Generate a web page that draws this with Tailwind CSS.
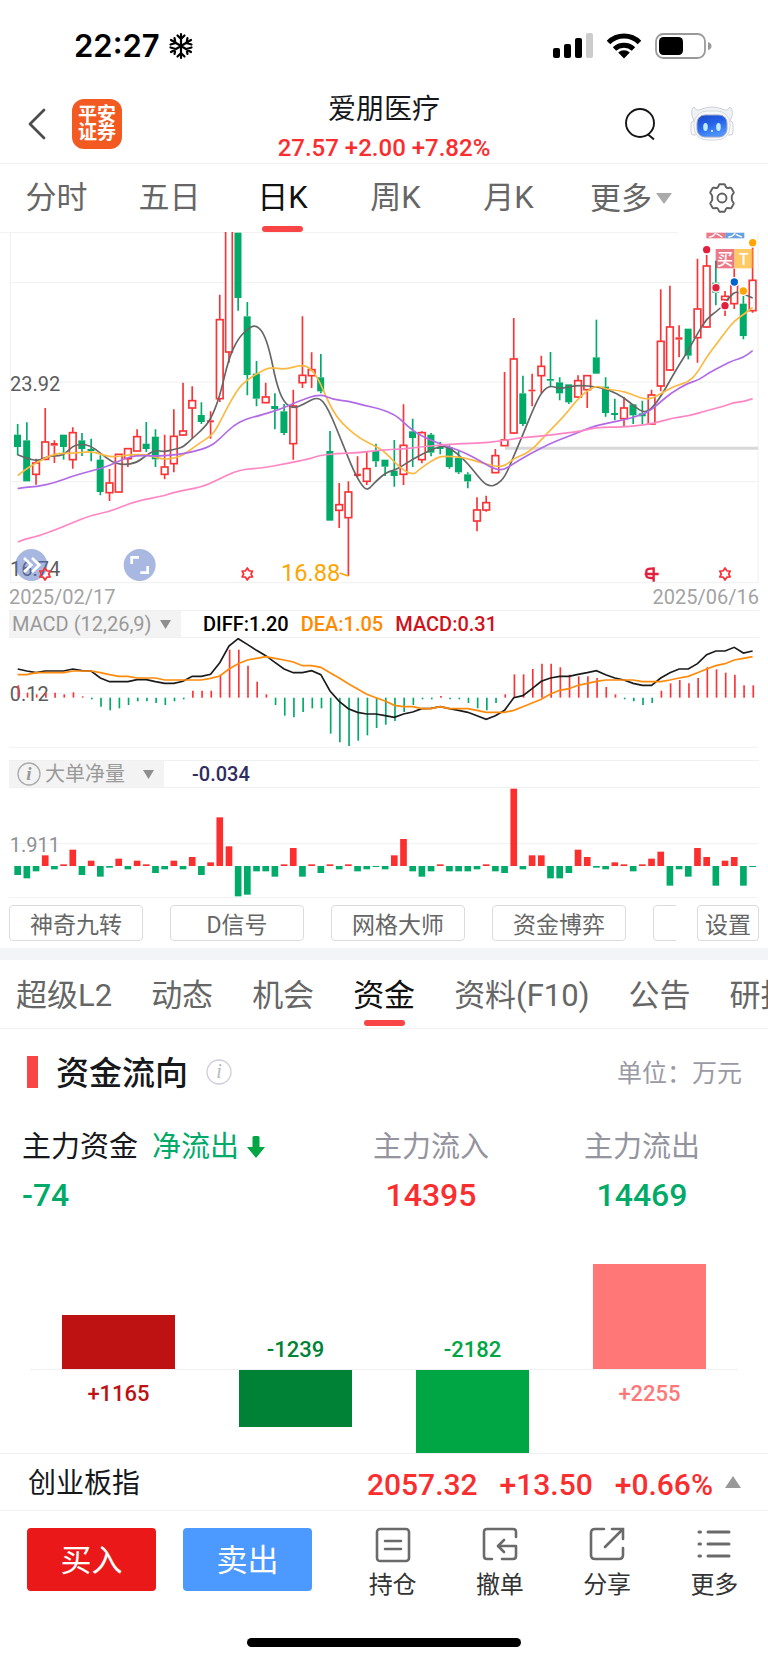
<!DOCTYPE html>
<html lang="zh-CN">
<head>
    <meta charset="UTF-8">
    <meta name="viewport" content="width=device-width, initial-scale=1.0">
    <title>爱朋医疗</title>
    <script src="https://cdn.jsdelivr.net/npm/@tailwindcss/browser@4"></script>
</head>
<body class="bg-white font-['Roboto','Noto_Sans_CJK_SC',sans-serif] text-[#17181c] overflow-x-hidden">

    <!-- Status bar -->
    <div class="h-[88px] pt-1 pl-[74px] pr-14 flex items-center justify-between">
        <div class="flex items-center gap-2 text-black">
            <span class="font-['Inter',sans-serif] text-[31px] leading-8 font-semibold">22:27</span>
            <svg class="w-[26px] h-[28px]" viewBox="0 0 26 28" fill="none" stroke="#000" stroke-width="2.2" stroke-linecap="round">
                <path d="M13 2v24M3 8l20 12M23 8L3 20M9.500 3.500L13 7l3.500-3.500M9.500 24.500L13 21l3.500 3.500M2.500 12.500l5-1.500-1-5M23.500 15.500l-5 1.500 1 5M23.500 12.500l-5-1.500 1-5M2.500 15.500l5 1.500-1 5"/>
            </svg>
        </div>
        <div class="flex items-center gap-[13px]">
            <svg class="w-10 h-[26px]" viewBox="0 0 40 26">
                <rect x="0" y="15" width="7" height="10" rx="2"/>
                <rect x="11" y="11" width="7" height="14" rx="2"/>
                <rect x="22" y="5" width="7" height="20" rx="2"/>
                <rect x="33" y="0" width="7" height="25" rx="2" fill="#ccc"/>
            </svg>
            <svg class="w-9 h-[26px]" viewBox="0 0 36 26" fill="none" stroke="#000" stroke-width="5">
                <path d="M2.500 9.500a22 22 0 0 1 31 0"/>
                <path d="M8.500 16a14 14 0 0 1 19 0"/>
                <path d="M18 25.500l-5.800-6a8.500 8.500 0 0 1 11.600 0z" fill="#000" stroke="none"/>
            </svg>
            <svg class="w-[57px] h-[26px]" viewBox="0 0 57 26">
                <rect x="1" y="1" width="49" height="24" rx="7.500" fill="none" stroke="#999" stroke-width="1.800"/>
                <rect x="4" y="4" width="24" height="18" rx="4.500"/>
                <path d="M53 9q3.500 1 3.500 4t-3.500 4z" fill="#999"/>
            </svg>
        </div>
    </div>

    <!-- Stock header -->
    <header class="h-[76px] pb-1 border-b border-[#f1f1f3] flex items-center justify-between pl-7 pr-[34px]">
        <div class="flex items-center gap-[26px] w-[200px]">
            <button aria-label="返回">
                <svg class="w-[18px] h-8" viewBox="0 0 18 32" fill="none" stroke="#4d4d4d" stroke-width="2.800" stroke-linecap="round" stroke-linejoin="round"><path d="M16 2L2 16l14 14"/></svg>
            </button>
            <a href="#" class="w-[50px] h-[50px] rounded-xl bg-[#f25a22] text-white text-[19px] leading-[18px] font-bold text-center flex items-center justify-center">平安<br>证券</a>
        </div>
        <div class="text-center">
            <h1 class="text-[28px] leading-12 font-normal">爱朋医疗</h1>
            <p class="text-[24px] leading-7 font-medium text-[#fa2d2f] whitespace-nowrap">27.57 +2.00 +7.82%</p>
        </div>
        <div class="flex items-center justify-end gap-[34px] w-[194px]">
            <button aria-label="搜索">
                <svg class="w-8 h-8" viewBox="0 0 32 32" fill="none" stroke="#15161a" stroke-width="1.900"><circle cx="16" cy="15" r="14"/><path d="M23.500 26l6.500 5.500"/></svg>
            </button>
            <button aria-label="智能助手">
                <svg class="w-11 h-9" viewBox="0 0 44 36">
                    <defs><linearGradient id="face" x1="0" y1="0" x2="0.400" y2="1"><stop offset="0" stop-color="#1d46c8"/><stop offset="0.500" stop-color="#2463e8"/><stop offset="1" stop-color="#4d92fb"/></linearGradient></defs>
                    <path d="M4 15Q-1 4 4 1q2 4 5 3 13-6 26 0 3 1 5-3 5 4 0 14" fill="#f0f1f5" stroke="#d0d2d9"/>
                    <rect x="1" y="15" width="7" height="14" rx="3" fill="#fafafa" stroke="#cfd0d7"/>
                    <rect x="36" y="15" width="7" height="14" rx="3" fill="#fafafa" stroke="#cfd0d7"/>
                    <rect x="4" y="5" width="36" height="29" rx="13" fill="#f6f7f9" stroke="#d9dadf"/>
                    <rect x="7" y="9" width="30" height="22" rx="8" fill="url(#face)" stroke="#9aa4c8"/>
                    <ellipse cx="15.500" cy="21" rx="2.300" ry="4" fill="#c3ecff"/>
                    <ellipse cx="28.500" cy="21" rx="2.300" ry="4" fill="#c3ecff"/>
                    <circle cx="22" cy="25" r="1" fill="#fff"/>
                </svg>
            </button>
        </div>
    </header>

    <!-- Period tabs -->
    <nav class="h-[68px] grid grid-cols-[113fr_113fr_113fr_113fr_113fr_132fr_50fr_21fr] text-[31px] leading-[67px] text-[#666] text-center">
        <a href="#">分时</a>
        <a href="#">五日</a>
        <a href="#" class="text-[#111] flex flex-col items-center">
            <span class="h-[62px]">日K</span>
            <span class="w-[41px] h-[6px] rounded-[3px] bg-[#f94545]"></span>
        </a>
        <a href="#">周K</a>
        <a href="#">月K</a>
        <button class="flex items-center justify-center gap-1">更多
            <svg class="w-4 h-[11px]" viewBox="0 0 16 11"><path d="M0 0h16L8 11z" fill="#aaa"/></svg>
        </button>
        <button class="flex items-center justify-center" aria-label="图表设置">
            <svg class="w-[30px] h-[30px]" viewBox="0 0 30 30" fill="none" stroke="#606060" stroke-width="1.900" stroke-linejoin="round">
                <path d="M12.500 1.200h5c.7 0 .8 2.800 2.300 3.600s3.800-.7 4.400 0l2.600 4.600c.4.800-2 2.300-2 3.900v3.400c0 1.600 2.400 3.100 2 3.900l-2.600 4.600c-.6.700-2.900-.8-4.400 0s-1.600 3.600-2.300 3.600h-5c-.7 0-.8-2.800-2.300-3.600s-3.800.7-4.400 0l-2.600-4.600c-.4-.8 2-2.300 2-3.900v-3.400c0-1.600-2.400-3.100-2-3.900l2.600-4.600c.6-.7 2.900.8 4.400 0s1.600-3.600 2.300-3.600z"/>
                <circle cx="15" cy="15" r="4.500"/>
            </svg>
        </button>
    </nav>

    <!-- K line chart, svg units are thirds of a pixel -->
    <svg id="kline" class="block w-full" viewBox="0 20 2304 1056" role="img" aria-label="日K线图">
        <g stroke="#f0f0f1" stroke-width="3" fill="none">
            <path d="M0 21H2034M30 172H2274M30 470H2274M30 769H2274M30 1072H2274M31 20V1072M2274 24V1072"/>
        </g>
        <path d="M1515 669H2274" stroke="#d8d8d8" stroke-width="9"/>
        <g id="candles"></g>
        <g id="averages" fill="none" stroke-width="5"></g>
        <g class="font-['Roboto',sans-serif]" font-size="60" fill="#5c5c5c">
            <text x="30" y="498">23.92</text>
            <text x="30" y="1053">16.74</text>
        </g>
        <text x="843" y="1067" font-size="71" fill="#ffa500" class="font-['Roboto',sans-serif]">16.88</text>
        <path d="M1019 1043l26 9" stroke="#ffa500" stroke-width="5"/>
        <circle cx="94" cy="1019" r="48" fill="#4f6fc0" fill-opacity="0.500"/>
        <path d="M72 998l22 21-22 21M96 998l22 21-22 21" fill="none" stroke="#fff" stroke-width="8"/>
        <circle cx="419" cy="1019" r="48" fill="#a8b8e0"/>
        <path d="M395 1016V996h22M421 1042h22v-20" fill="none" stroke="#fff" stroke-width="8"/>
        <g id="stars" fill="none" stroke="#fa3436" stroke-width="5" stroke-linejoin="round"></g>
        <path d="M1962 1030h-10q-13 0-13 8v12q0 8 13 8h10M1961 1026v43M1934 1046h42" stroke="#e0203c" stroke-width="7" fill="none"/>
        <g fill-opacity="0.600">
            <rect x="2119" y="22" width="57" height="17" fill="#e0203c"/>
            <rect x="2176" y="22" width="57" height="17" fill="#0062d0"/>
            <rect x="2147" y="71" width="56" height="58" fill="#e0203c"/>
            <rect x="2203" y="71" width="56" height="58" fill="#ffa500"/>
        </g>
        <svg x="2119" y="22" width="114" height="17" viewBox="0 0 114 17">
            <g font-size="48" fill="#fff" class="font-['Noto_Sans_CJK_SC',sans-serif]"><text x="4" y="9">买</text><text x="61" y="9">卖</text></g>
        </svg>
        <g font-size="48" fill="#fff" text-anchor="middle" class="font-['Noto_Sans_CJK_SC',sans-serif] font-medium">
            <text x="2175" y="118">买</text><text x="2231" y="118">T</text>
        </g>
        <g id="trades"></g>
    </svg>
    <div class="h-[23px] px-[9px] flex justify-between text-[20px] leading-[26px] text-[#a3a3a3]">
        <span>2025/02/17</span><span>2025/06/16</span>
    </div>

    <!-- MACD -->
    <section class="px-[9px]">
        <div class="mt-[3px] h-7 border-y border-[#f0f0f0] flex items-center text-[20px] leading-[26px] font-medium whitespace-nowrap">
            <button class="h-[26px] w-[172px] px-[3px] bg-[#f3f3f3] font-normal text-[#999] flex items-center gap-2">MACD (12,26,9)
                <svg class="w-[11px] h-[9px]" viewBox="0 0 11 9"><path d="M0 0h11L5.500 9z" fill="#8e8e8e"/></svg>
            </button>
            <span class="ml-[22px] text-black">DIFF:1.20</span>
            <span class="ml-3 text-[#ff8a00]">DEA:1.05</span>
            <span class="ml-3 text-[#d0121b]">MACD:0.31</span>
        </div>
    </section>
    <svg class="block w-full" viewBox="0 143 2304 330" role="img" aria-label="MACD">
        <path d="M27 310H2274M27 471H2274" stroke="#f1f1f2" stroke-width="3"/>
        <text x="29" y="333" font-size="60" fill="#5c5c5c" class="font-['Roboto',sans-serif]">0.12</text>
        <g id="macd"></g>
    </svg>

    <!-- Large order net volume -->
    <section class="px-[9px] pt-3">
        <div class="h-7 border-y border-[#f0f0f0] flex items-center text-[20px] leading-[26px]">
            <button class="h-[26px] w-[155px] pl-2 bg-[#f3f3f3] text-[#999] flex items-center">
                <svg class="w-6 h-6 mr-1" viewBox="0 0 24 24"><circle cx="12" cy="12" r="11" fill="none" stroke="#aaa" stroke-width="1.300"/><text x="12" y="18" text-anchor="middle" font-size="19" fill="#999" class="font-['Liberation_Serif',serif] italic font-bold">i</text></svg>
                大单净量
                <svg class="w-[11px] h-[9px] ml-[18px]" viewBox="0 0 11 9"><path d="M0 0h11L5.500 9z" fill="#8e8e8e"/></svg>
            </button>
            <span class="ml-7 font-medium text-[#302c60]">-0.034</span>
        </div>
    </section>
    <svg class="block w-full" viewBox="0 590 2304 330" role="img" aria-label="大单净量">
        <path d="M27 757H2274M27 919H2274" stroke="#f1f1f2" stroke-width="3"/>
        <text x="29" y="781" font-size="60" fill="#8f8f96" class="font-['Roboto',sans-serif]">1.911</text>
        <g id="net"></g>
    </svg>

    <!-- Indicator shortcuts -->
    <div class="pt-[7px] pb-[7px] px-[9px] flex text-[23px] leading-8 text-[#666]">
        <div class="flex-1 flex gap-[27px] overflow-hidden mr-[21px]">
            <button class="w-[134px] shrink-0 h-9 pt-1 border border-[#dcdcdc] rounded">神奇九转</button>
            <button class="w-[134px] shrink-0 h-9 pt-1 border border-[#dcdcdc] rounded">D信号</button>
            <button class="w-[134px] shrink-0 h-9 pt-1 border border-[#dcdcdc] rounded">网格大师</button>
            <button class="w-[134px] shrink-0 h-9 pt-1 border border-[#dcdcdc] rounded">资金博弈</button>
            <button class="w-[134px] shrink-0 h-9 pt-1 border border-[#dcdcdc] rounded" aria-label="更多指标"></button>
        </div>
        <button class="w-[62px] h-9 pt-1 border border-[#dcdcdc] rounded">设置</button>
    </div>

    <!-- Info tabs -->
    <nav class="border-t-12 border-t-[#f3f4f8] border-b border-b-[#f1f1f3] h-[81px] pl-4 flex gap-[39px] overflow-hidden whitespace-nowrap text-[31px] leading-[72px] text-[#666]">
        <a href="#">超级L2</a>
        <a href="#">动态</a>
        <a href="#">机会</a>
        <a href="#" class="text-[#111] flex flex-col items-center">
            <span class="h-[60px]">资金</span>
            <span class="w-[41px] h-[6px] rounded-[3px] bg-[#f94545]"></span>
        </a>
        <a href="#">资料(F10)</a>
        <a href="#">公告</a>
        <a href="#">研报</a>
    </nav>

    <!-- Capital flow -->
    <main>
        <div class="pt-5 pl-[27px] pr-[26px] flex items-center">
            <span class="w-[11px] h-8 bg-[#f94545]"></span>
            <h2 class="ml-[18px] pt-1 text-[33px] leading-[42px] font-medium">资金流向</h2>
            <button class="ml-[18px]" aria-label="说明">
                <svg class="w-[26px] h-[26px]" viewBox="0 0 26 26"><circle cx="13" cy="13" r="12" fill="none" stroke="#ceced8" stroke-width="1.300"/><text x="13" y="19" text-anchor="middle" font-size="20" fill="#b8b8c4" class="font-['Liberation_Serif',serif] italic">i</text></svg>
            </button>
            <span class="ml-auto pt-1 text-[25px] text-[#9a9aa4]">单位：万元</span>
        </div>
        <div class="mt-8 pl-[22px] grid grid-cols-[304fr_210fr_212fr_20fr] text-[29px] leading-10">
            <div>
                <p class="flex items-center">主力资金<span class="ml-[14px] mr-2 text-[#00aa68]">净流出</span>
                    <svg class="w-[18px] h-[22px]" viewBox="0 0 18 22"><path d="M5.500 1.500q0-1.500 1.500-1.500h4q1.500 0 1.500 1.500V11H18L9 22 0 11h5.500z" fill="#00a544"/></svg>
                </p>
                <p class="mt-2 text-[32px] font-medium text-[#00aa68]">-74</p>
            </div>
            <div class="text-center">
                <p class="text-[#94949e]">主力流入</p>
                <p class="mt-2 text-[32px] font-medium text-[#fa2d2f]">14395</p>
            </div>
            <div class="text-center">
                <p class="text-[#94949e]">主力流出</p>
                <p class="mt-2 text-[32px] font-medium text-[#00aa68]">14469</p>
            </div>
        </div>
        <div class="mt-[47px] px-[30px] grid grid-cols-4 text-[22px] leading-8 font-medium text-center">
            <div class="flex flex-col">
                <div class="h-[108px] flex flex-col justify-end border-b border-[#f0f0f2]"><div class="mx-8 bg-[#be1212]" style="height:54px"></div></div>
                <p class="pt-2 text-[#be1212]">+1165</p>
            </div>
            <div class="flex flex-col text-[#008236]">
                <div class="h-[108px] flex flex-col justify-end border-b border-[#f0f0f2]"><p class="mb-[3px]">-1239</p></div>
                <div class="mx-8 bg-[#008236]" style="height:57px"></div>
            </div>
            <div class="flex flex-col text-[#00a544]">
                <div class="h-[108px] flex flex-col justify-end border-b border-[#f0f0f2]"><p class="mb-[3px]">-2182</p></div>
                <div class="mx-8 bg-[#00a544]" style="height:83px"></div>
            </div>
            <div class="flex flex-col">
                <div class="h-[108px] flex flex-col justify-end border-b border-[#f0f0f2]"><div class="mx-8 bg-[#ff7777]" style="height:105px"></div></div>
                <p class="pt-2 text-[#ff7777]">+2255</p>
            </div>
        </div>
    </main>

    <!-- Index row -->
    <div class="h-[58px] pt-1 border-y border-[#f0f0f4] pl-7 pr-[27px] flex items-center text-[28px]">
        <span>创业板指</span>
        <span class="ml-auto flex gap-[22px] text-[30px] font-medium text-[#fa2d2f]"><span>2057.32</span><span>+13.50</span><span>+0.66%</span></span>
        <svg class="ml-3 mb-1 w-4 h-3" viewBox="0 0 16 12"><path d="M8 0l8 12H0z" fill="#999"/></svg>
    </div>

    <!-- Trade bar -->
    <footer>
        <div class="pt-4 pl-[27px] flex items-start">
            <button class="mt-px pt-1 w-[129px] h-[63px] rounded bg-[#ea1818] text-white text-[31px]">买入</button>
            <button class="mt-px pt-1 ml-[27px] w-[129px] h-[63px] rounded bg-[#4c9aff] text-white text-[31px]">卖出</button>
            <div class="ml-[27px] flex-1 grid grid-cols-4 text-[24px] leading-8 text-[#333]">
                <button class="flex flex-col items-center gap-1.5">
                    <svg class="w-9 h-9" viewBox="0 0 36 36" fill="none" stroke="#6a6a6a" stroke-width="2.600" stroke-linecap="round"><rect x="2" y="2" width="32" height="32" rx="3"/><path d="M10 14h16M10 22h16"/></svg>
                    持仓
                </button>
                <button class="flex flex-col items-center gap-1.5">
                    <svg class="w-9 h-9" viewBox="0 0 36 36" fill="none" stroke="#6a6a6a" stroke-width="2.600" stroke-linecap="round" stroke-linejoin="round"><path d="M34 10V5q0-3-3-3H5Q2 2 2 5v24q0 3 3 3h5M20 32h11q3 0 3-3V19H17M22 13l-6 6 6 6"/></svg>
                    撤单
                </button>
                <button class="flex flex-col items-center gap-1.5">
                    <svg class="w-9 h-9" viewBox="0 0 36 36" fill="none" stroke="#6a6a6a" stroke-width="2.600" stroke-linecap="round"><path d="M15 2H6Q2 2 2 6v22q0 4 4 4h24q4 0 4-4v-7M23 2h11v10M33 3L16 20"/></svg>
                    分享
                </button>
                <button class="flex flex-col items-center gap-1.5">
                    <svg class="w-9 h-9" viewBox="0 0 36 36" fill="none" stroke="#6a6a6a" stroke-width="3" stroke-linecap="round"><path d="M3 5h1.500M3 17h1.500M3 29h1.500M12 5h21M12 17h21M12 29h21"/></svg>
                    更多
                </button>
            </div>
        </div>
        <div class="mt-[37px] mb-[14px] mx-auto w-[274px] h-[9px] rounded-full bg-black"></div>
    </footer>

    <script>
        const RED = '#fa3436';
        const GREEN = '#00aa68';
        const NS = 'http://www.w3.org/2000/svg';
        const xAt = i => 53 + 27.56 * i;

        function add(parentId, tag, attrs) {
            const el = document.createElementNS(NS, tag);
            for (const key in attrs) el.setAttribute(key, attrs[key]);
            document.getElementById(parentId).appendChild(el);
        }

        // up (1) or down (0), high, body top, body bottom, low
        const candles = [
            [0,596,628,665,690],[0,591,645,768,768],[1,700,713,747,778],[1,548,650,702,705],[1,645,653,661,713],
            [0,628,628,665,703],[1,606,622,703,730],[0,623,645,671,692],[0,640,671,677,708],[0,690,703,800,810],
            [1,731,773,802,827],[1,687,687,800,800],[1,670,670,700,725],[1,612,634,677,677],[0,590,655,671,680],
            [0,612,634,702,725],[1,628,725,747,762],[1,552,633,715,741],[1,472,617,629,632],[1,483,526,548,640],
            [0,531,569,590,596],[1,558,585,591,640],[1,208,283,520,530],[1,22,0,380,412],[0,22,22,218,256],
            [0,230,273,449,510],[0,407,445,520,543],[1,472,515,532,534],[0,504,542,551,612],[0,536,558,623,629],
            [1,493,542,655,703],[1,273,450,472,488],[1,381,433,451,488],[0,386,456,498,504],[0,617,677,886,886],
            [1,773,838,855,908],[1,768,800,877,1052],[1,693,745,752,755],[1,680,730,768,779],[0,655,677,708,725],
            [0,703,703,724,752],[0,644,736,752,784],[1,537,660,747,779],[0,580,618,638,725],[1,618,622,703,714],
            [0,623,628,682,693],[0,650,665,671,687],[0,660,665,725,730],[0,677,698,741,746],[0,741,747,768,789],
            [1,816,854,887,918],[1,811,832,854,859],[1,671,691,742,743],[1,440,644,661,662],[1,278,401,623,625],
            [0,451,504,596,602],[1,445,493,498,543],[1,391,423,451,504],[0,380,461,466,482],[0,456,471,504,525],
            [0,477,477,531,536],[1,450,466,515,518],[1,450,451,493,548],[0,283,396,445,445],[0,456,484,563,574],
            [0,520,563,569,585],[1,515,548,580,605],[0,536,537,570,596],[0,526,564,573,596],[1,493,509,596,598],
            [1,192,348,482,498],[1,181,305,434,437],[1,300,336,343,396],[0,310,310,391,402],[1,100,251,337,412],
            [1,88,122,305,307],[0,106,172,202,240],[1,197,213,223,272],[1,130,165,235,251],[0,210,235,332,342],
            [1,60,165,256,262]
        ];
        candles.forEach(([up, high, top, bottom, low], i) => {
            const x = xAt(i);
            const color = up ? RED : GREEN;
            add('candles', 'path', { d: `M${x} ${high}V${top}M${x} ${bottom}V${low}`, stroke: color, 'stroke-width': 5 });
            if (up && bottom - top > 9) {
                add('candles', 'rect', { x: x - 10, y: top, width: 20, height: bottom - top, fill: '#fff', stroke: color, 'stroke-width': 5 });
            } else {
                add('candles', 'rect', { x: x - 11, y: top, width: 21, height: Math.max(bottom - top, 5), fill: color });
            }
        });

        // Moving averages: x,y pairs joined through their midpoints
        const averages = [
            ['#666', '53,688 108,711 140,693 190,691 218,662 245,656 273,662 300,682 335,710 370,719 411,712 438,690 466,674 493,680 521,672 548,667 576,640 604,615 631,585 659,515 686,400 714,340 742,312 765,298 790,320 810,380 828,470 850,530 880,550 910,537 955,512 985,550 1030,660 1060,735 1085,780 1103,796 1125,770 1160,740 1190,733 1240,700 1290,675 1325,661 1350,668 1390,700 1420,735 1450,772 1470,783 1490,778 1515,755 1540,695 1570,625 1600,550 1625,500 1650,480 1680,491 1710,483 1740,480 1790,484 1830,495 1870,515 1905,545 1932,562 1955,550 1985,510 2030,430 2065,375 2095,320 2120,280 2150,258 2175,235 2190,212 2210,197 2235,208 2258,218'],
            ['#fcb941', '53,751 80,730 108,713 163,684 218,684 273,678 300,686 335,696 390,688 438,688 466,696 493,702 521,699 548,690 576,670 604,650 631,633 650,610 680,550 714,490 742,463 780,440 810,425 855,433 905,418 930,428 955,460 985,530 1010,575 1040,607 1080,640 1130,665 1155,680 1200,728 1240,750 1260,730 1310,697 1330,692 1390,696 1440,711 1490,724 1515,722 1540,700 1570,688 1600,670 1640,625 1690,575 1730,525 1760,497 1790,480 1820,492 1860,496 1890,505 1920,517 1945,522 1970,512 2000,495 2030,480 2065,470 2090,445 2120,395 2150,355 2180,315 2205,285 2230,268 2258,246'],
            ['#b26be6', '53,790 80,785 108,784 163,773 218,752 273,737 328,722 370,700 411,690 466,692 521,690 576,680 631,664 660,640 700,600 740,580 770,573 840,552 890,530 960,505 1000,523 1045,527 1090,540 1140,550 1185,568 1210,590 1240,618 1290,645 1350,665 1400,685 1440,707 1480,730 1510,735 1540,715 1590,685 1650,655 1700,635 1750,615 1790,600 1850,588 1900,577 1945,560 1970,540 2010,505 2065,473 2095,465 2130,440 2170,420 2200,405 2230,397 2258,376'],
            ['#ff86c4', '53,950 80,940 108,934 163,915 218,892 273,870 328,859 370,842 411,827 493,811 521,801 604,785 650,765 700,740 740,731 780,729 860,715 930,700 960,690 1010,685 1080,682 1140,674 1210,671 1260,665 1350,656 1430,654 1500,648 1560,637 1630,632 1690,624 1740,618 1790,606 1870,605 1910,601 1960,595 2020,577 2065,572 2120,556 2170,543 2200,532 2230,529 2258,520']
        ];
        averages.forEach(([color, text]) => {
            const pts = text.split(' ').map(p => p.split(',').map(Number));
            let d = `M${pts[0]}`;
            for (let i = 1; i < pts.length - 1; i++) {
                d += `Q${pts[i]} ${(pts[i][0] + pts[i + 1][0]) / 2},${(pts[i][1] + pts[i + 1][1]) / 2}`;
            }
            d += `L${pts[pts.length - 1]}`;
            add('averages', 'path', { d, stroke: color });
        });

        // Event stars under the chart
        [135, 742, 2175].forEach(cx => {
            const pts = [];
            for (let k = 0; k < 12; k++) {
                const r = k % 2 ? 11 : 18;
                const a = Math.PI * k / 6 - Math.PI / 2;
                pts.push(`${cx + r * Math.cos(a)},${1046 + r * Math.sin(a)}`);
            }
            add('stars', 'polygon', { points: pts.join(' ') });
        });

        [[2120,73,'#e0203c'],[2148,187,'#e0203c'],[2175,241,'#e0203c'],[2203,170,'#0062d0'],[2258,52,'#ffa500'],[2230,197,'#ffa500']].forEach(([cx, cy, fill]) => {
            add('trades', 'circle', { cx, cy, r: 13, fill, stroke: '#fff', 'stroke-width': 4 });
        });

        // MACD bars, measured from the zero line at 322
        const macd = [285,307,312,307,307,312,306,318,327,349,360,354,344,333,333,338,344,333,327,301,301,301,253,178,178,226,274,312,344,376,381,365,354,354,430,456,467,451,435,413,403,392,365,344,327,327,317,327,327,338,354,360,338,312,252,252,236,220,220,231,253,258,258,263,290,312,327,333,344,338,301,279,269,279,263,231,237,247,253,285,285];
        macd.forEach((y, i) => {
            const x = xAt(i) + 2;
            add('macd', 'path', { d: `M${x} 322V${y}`, stroke: y < 322 ? RED : GREEN, 'stroke-width': 5 });
        });
        const diff = [236,242,247,242,242,242,236,241,242,263,274,274,274,268,268,274,279,279,273,258,258,252,217,167,145,162,180,196,216,236,247,247,241,253,302,333,355,366,371,371,376,381,371,365,355,354,349,355,360,366,376,387,376,360,322,316,295,273,263,258,258,252,247,241,253,263,269,279,285,285,263,247,236,236,220,193,182,182,171,188,182];
        const dea = [253,253,247,247,247,247,242,242,242,247,253,258,258,263,263,263,269,269,269,269,269,264,257,236,220,209,204,199,204,209,215,226,226,231,247,263,280,296,312,322,332,345,349,349,355,355,349,355,355,355,360,366,366,366,360,349,338,327,311,300,295,285,279,273,269,269,269,269,274,274,274,269,263,258,247,236,226,220,209,204,199];
        [[diff, '#1b1b1b'], [dea, '#ff8a0a']].forEach(([line, stroke]) => {
            add('macd', 'polyline', { points: line.map((y, i) => `${xAt(i)},${y}`).join(' '), fill: 'none', stroke, 'stroke-width': 5 });
        });

        // Net volume bars, measured from the zero line at 824
        const net = [851,861,840,792,834,819,775,851,808,856,829,802,834,808,819,845,834,808,834,797,851,813,678,765,915,910,840,840,856,819,770,856,819,845,819,834,819,840,834,827,834,792,743,840,856,840,819,840,840,840,834,819,840,845,592,834,792,792,861,861,845,775,797,829,834,813,819,840,819,802,781,883,834,856,770,797,883,808,797,883,827];
        net.forEach((y, i) => {
            add('net', 'rect', { x: xAt(i) - 10, y: Math.min(y, 824), width: 20, height: Math.abs(y - 824), fill: y < 824 ? '#fc2f2f' : GREEN });
        });
    </script>
</body>
</html>
